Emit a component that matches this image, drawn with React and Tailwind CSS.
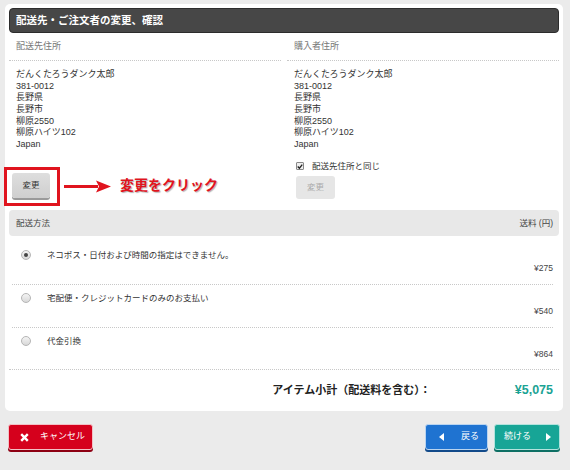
import React from 'react';

const addr = ['だんくたろうダンク太郎', '381-0012', '長野県', '長野市', '柳原2550', '柳原ハイツ102', 'Japan'];

function Address() {
    return (
        <div className="pl-[7px] pt-[8px] text-[9px] leading-[11.65px] text-[#333]">
            {addr.map(line => <div key={line}>{line}</div>)}
        </div>
    );
}

function ColumnHead({ title }) {
    return (
        <div className="flex h-[28px] items-center border-b border-dotted border-[#c8c8c8] pl-[7px] text-[9px] text-[#777]">
            {title}
        </div>
    );
}

function Radio({ checked }) {
    return (
        <span className="flex h-[10px] w-[10px] items-center justify-center rounded-full border border-[#b5b5b5] bg-gradient-to-b from-[#f4f4f4] to-[#d8d8d8]">
            {checked && <span className="h-[4px] w-[4px] rounded-full bg-[#444]" />}
        </span>
    );
}

function ShipRow({ label, price, checked, first, last }) {
    return (
        <div className={`${first ? 'pt-[13px]' : 'pt-[7px]'} ${last ? 'pb-[9px]' : 'pb-[10px] border-b border-dotted border-[#c8c8c8]'}`}>
            <div className="flex h-[12px] items-center pl-[9px] text-[8.5px] text-[#333]">
                <Radio checked={checked} />
                <span className="ml-[16px]">{label}</span>
            </div>
            <div className="mt-[1px] flex h-[12px] items-center justify-end text-[8.5px] text-[#444]">{price}</div>
        </div>
    );
}

export default function App() {
    return (
        <div className="min-h-[470px] bg-[#ebebeb] pt-[4px] font-['Liberation_Sans','Noto_Sans_CJK_JP',sans-serif]">
            <div className="ml-[5px] w-[558px] rounded-[5px] bg-white px-[4px] pt-[4px]">
                {/* Title bar */}
                <div className="flex h-[25px] items-center rounded-[4px] border border-[#2c2c2c] bg-[#474747] px-[6px] text-[10.5px] font-bold text-white">
                    配送先・ご注文者の変更、確認
                </div>

                <div className="grid grid-cols-2 gap-[6px]">
                    {/* Shipping address */}
                    <div>
                        <ColumnHead title="配送先住所" />
                        <Address />
                        <div className="relative ml-[3px] mt-[22px] h-[25px] w-[38px]">
                            <button className="flex h-[25px] w-[38px] items-center justify-center rounded-[3px] bg-gradient-to-b from-[#dedede] to-[#cfcfcf] text-[8.5px] text-[#333] shadow-[0_2px_0_#9a9a9a]">
                                変更
                            </button>
                            <div className="absolute left-[-8px] top-[-6px] h-[39px] w-[56px] border-[3px] border-[#e0141e]" />
                            <svg className="absolute left-[52px] top-[7px]" width="48" height="13" viewBox="0 0 48 13">
                                <path d="M0 6.5 L34 5.5 L34 7.5 Z" fill="#e0141e" />
                                <rect x="0" y="5" width="34" height="3" fill="#e0141e" />
                                <path d="M32 0.5 L47 6.5 L32 12.5 L35 6.5 Z" fill="#e0141e" />
                            </svg>
                            <span className="absolute left-[108px] top-[4px] whitespace-nowrap text-[14px] font-bold leading-[16px] text-[#e0141e] [text-shadow:1px_1px_1px_rgba(0,0,0,0.3)]">
                                変更をクリック
                            </span>
                        </div>
                    </div>

                    {/* Buyer address */}
                    <div>
                        <ColumnHead title="購入者住所" />
                        <Address />
                        <div className="ml-[9px] mt-[9.5px] flex h-[12px] items-center text-[8.5px] text-[#333]">
                            <span className="flex h-[8px] w-[8px] items-center justify-center rounded-[1px] border border-[#888] bg-[#eee]">
                                <svg width="7" height="7" viewBox="0 0 8 8"><path d="M1 4 L3.2 6.3 L7 1.5" stroke="#222" strokeWidth="1.8" fill="none" /></svg>
                            </span>
                            <span className="ml-[8px]">配送先住所と同じ</span>
                        </div>
                        <button className="ml-[9px] mt-[4px] flex h-[23px] w-[39px] items-center justify-center rounded-[3px] bg-[#e6e6e6] text-[8.5px] text-[#aaa]">
                            変更
                        </button>
                    </div>
                </div>

                {/* Shipping method header */}
                <div className="mt-[11px] flex h-[26px] items-center justify-between rounded-[4px] bg-[#e8e8e8] pl-[7px] pr-[6px] text-[8.5px] text-[#444]">
                    <span>配送方法</span>
                    <span>送料 (円)</span>
                </div>

                <div className="ml-[3px] mr-[6px]">
                    <ShipRow first checked label="ネコポス・日付および時間の指定はできません。" price="¥275" />
                    <ShipRow label="宅配便・クレジットカードのみのお支払い" price="¥540" />
                    <ShipRow last label="代金引換" price="¥864" />
                </div>

                {/* Subtotal */}
                <div className="flex h-[42px] items-center justify-end border-t border-dotted border-[#c8c8c8] pr-[6px]">
                    <span className="text-[11px] font-bold text-[#222]">アイテム小計（配送料を含む）：</span>
                    <span className="ml-[84px] text-[12.5px] font-bold text-[#1ba394]">¥5,075</span>
                </div>
            </div>

            {/* Footer buttons */}
            <div className="mt-[13px] flex items-center justify-between pl-[8px] pr-[10px]">
                <button className="flex h-[26px] w-[85px] items-center rounded-[3px] border border-[#f3c0c5] bg-[#d5001c] pl-[11px] text-[9px] text-white shadow-[0_2px_0_#8e0013]">
                    <svg width="9" height="9" viewBox="0 0 9 9"><path d="M1.2 1.2 L7.8 7.8 M7.8 1.2 L1.2 7.8" stroke="white" strokeWidth="2.4" /></svg>
                    <span className="ml-[11px]">キャンセル</span>
                </button>
                <div className="flex gap-[6px]">
                    <button className="flex h-[26px] w-[63px] items-center rounded-[3px] border border-[#b9d4f0] bg-[#1f73d1] pl-[13px] text-[9px] text-white shadow-[0_2px_0_#124a8a]">
                        <svg width="5" height="8" viewBox="0 0 5 8"><path d="M5 0 L0 4 L5 8 Z" fill="white" /></svg>
                        <span className="ml-[17px]">戻る</span>
                    </button>
                    <button className="flex h-[26px] w-[66px] items-center rounded-[3px] border border-[#b3e3dd] bg-[#17a596] pl-[9px] text-[9px] text-white shadow-[0_2px_0_#0d6f64]">
                        <span>続ける</span>
                        <svg className="ml-[15px]" width="5" height="8" viewBox="0 0 5 8"><path d="M0 0 L5 4 L0 8 Z" fill="white" /></svg>
                    </button>
                </div>
            </div>
        </div>
    );
}
